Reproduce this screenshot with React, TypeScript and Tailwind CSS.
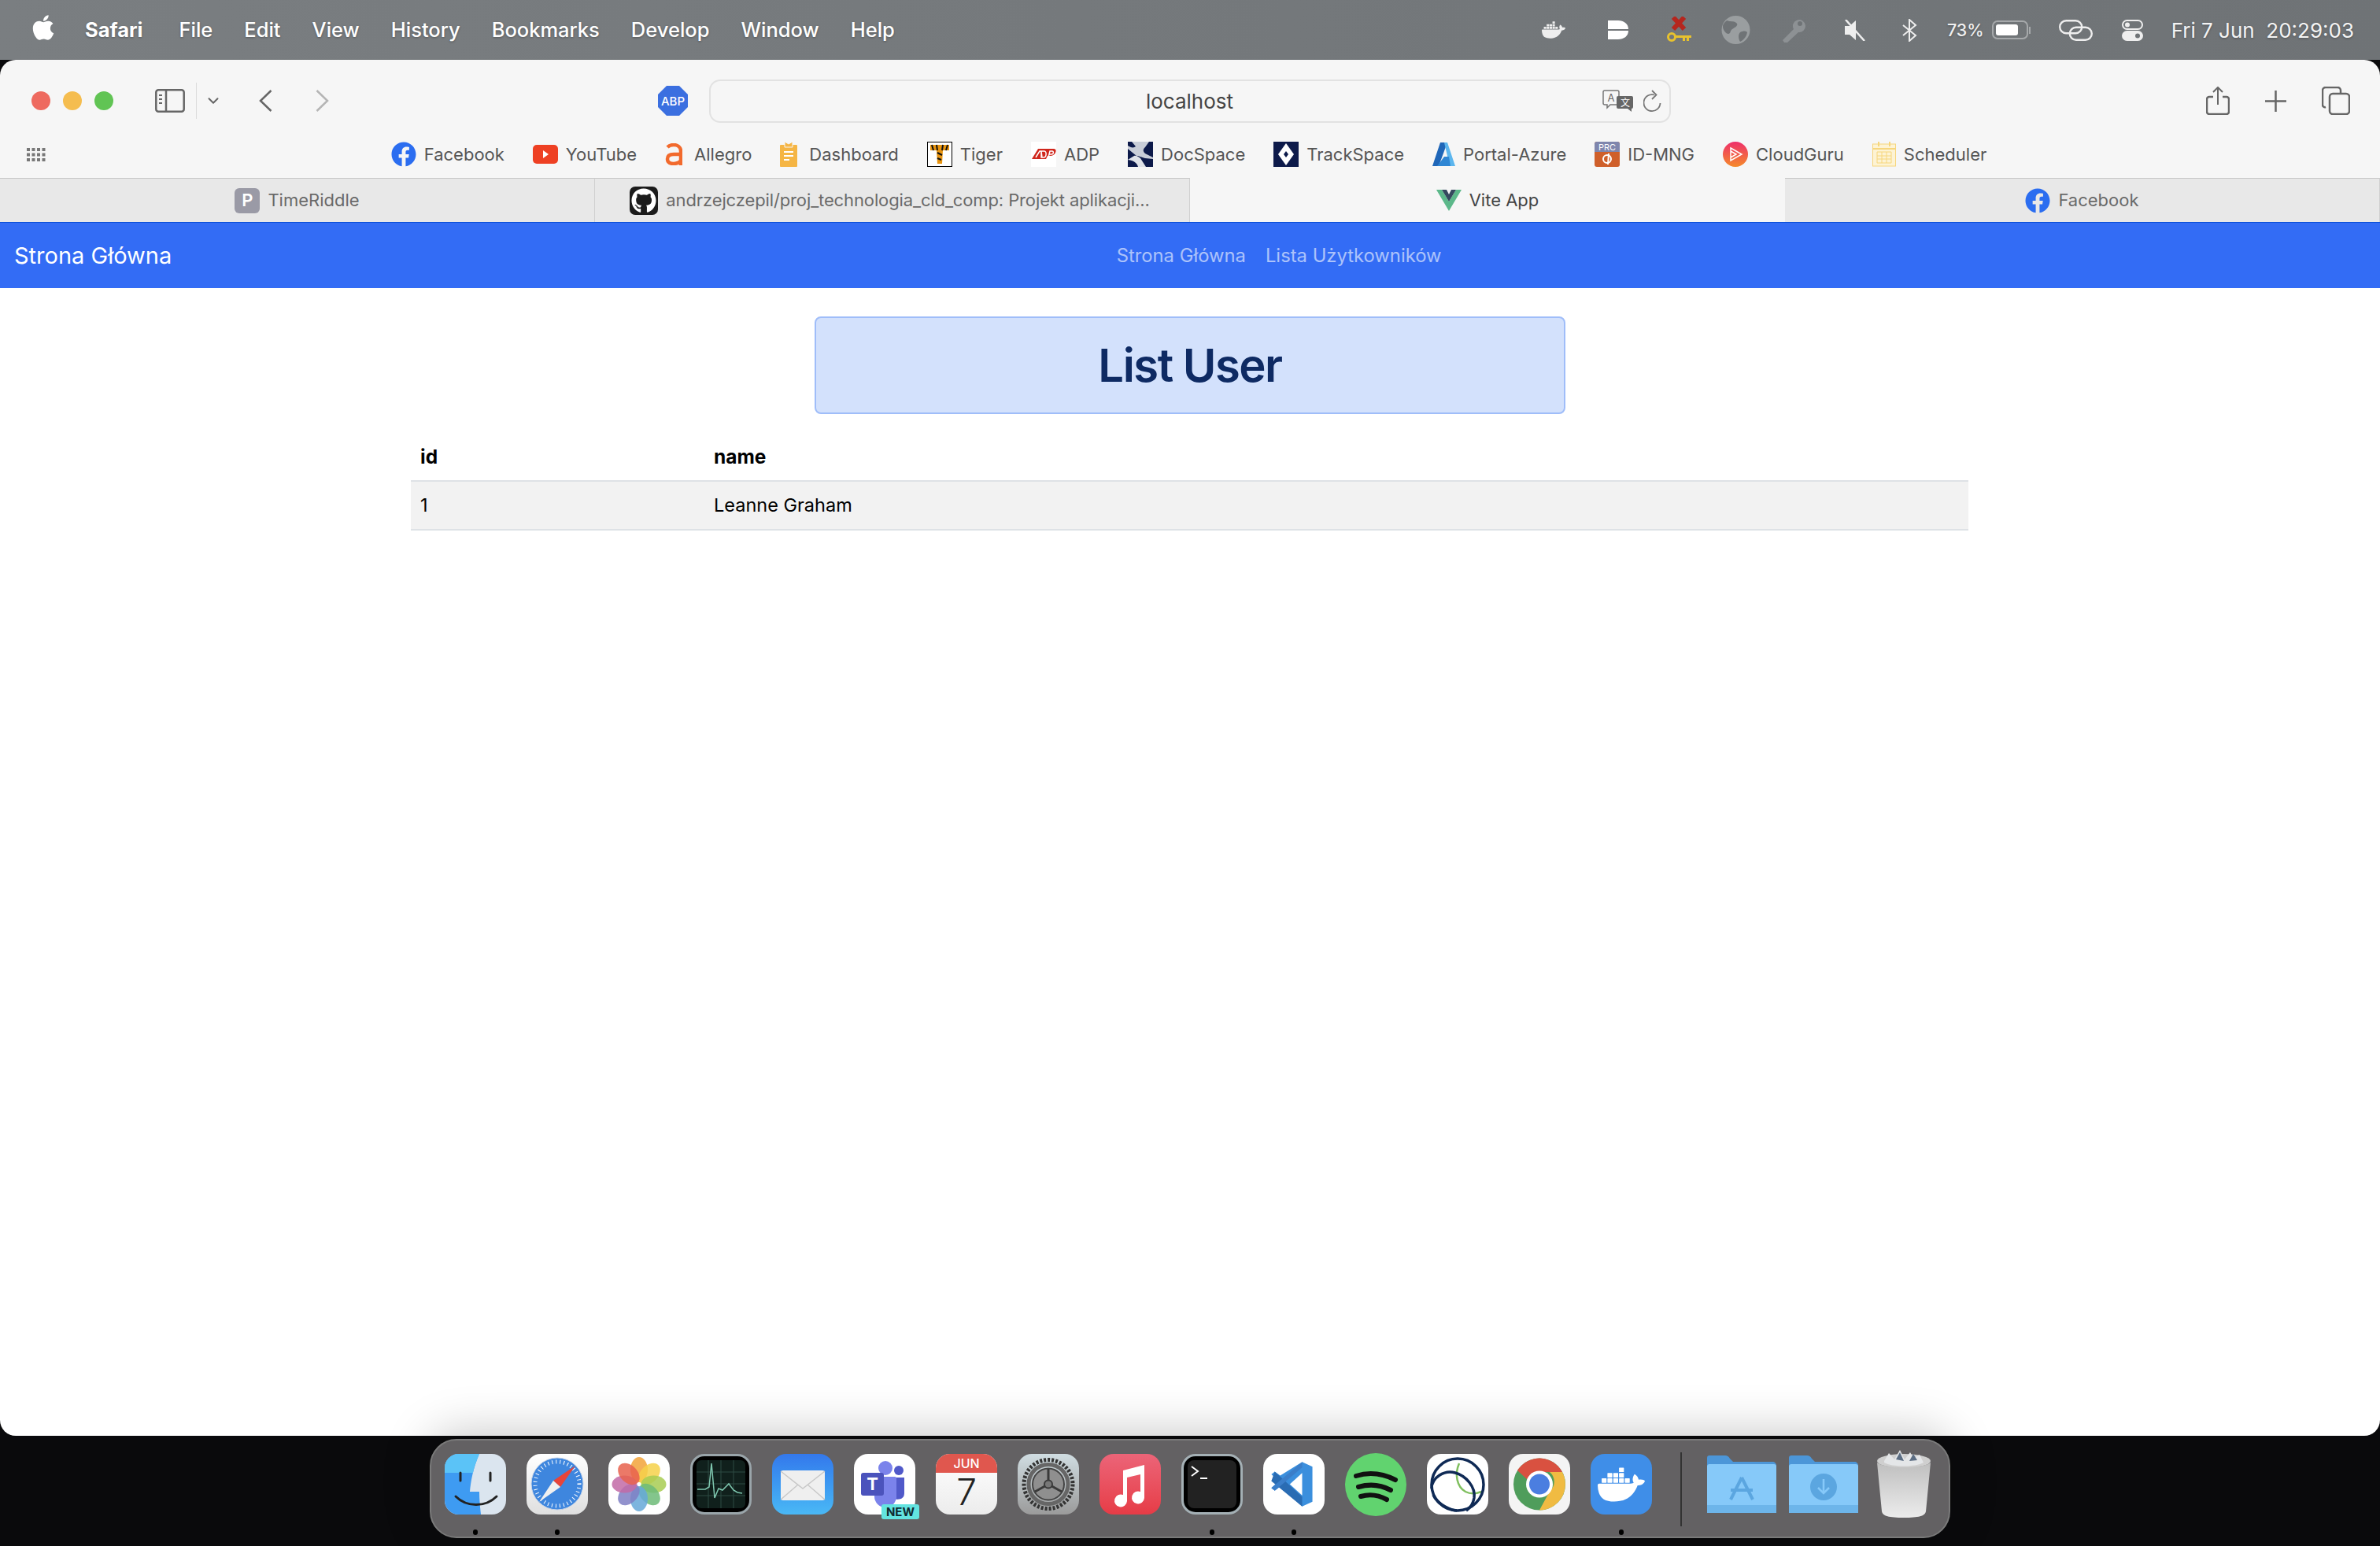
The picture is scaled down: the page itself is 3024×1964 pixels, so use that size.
import React from 'react'
import { FaApple, FaFacebook, FaGithub } from 'react-icons/fa'
import { SiDocker } from 'react-icons/si'
import { ChevronDown } from 'lucide-react'

const font = "font-['Inter','Noto_Sans',sans-serif]"

const menuItems = ['File', 'Edit', 'View', 'History', 'Bookmarks', 'Develop', 'Window', 'Help']

const MenuBar: React.FC = () => (
  <div className="h-[76px] shrink-0 flex items-center pl-[40px] pr-[33px] bg-gradient-to-r from-[#7a7e81] to-[#6f7376] text-white text-[25.500px] [text-shadow:0_1px_3px_rgba(0,0,0,0.3)]">
    <FaApple className="w-[30px] h-[36px] -mt-[6px]" />
    <span className="ml-[38px] font-bold">Safari</span>
    <div className="ml-[46px] flex gap-[40px] font-medium">
      {menuItems.map((item) => (
        <span key={item}>{item}</span>
      ))}
    </div>
    <div className="ml-auto flex items-center">
      <SiDocker className="w-[38px] h-[30px] text-[#eee]" />
      <svg className="ml-[50px]" width="26" height="24" viewBox="0 0 26 24">
        <path d="M0 0h13c7 0 13 4 13 11H0zM0 13h26c0 7-6 11-13 11H0z" fill="#fff" />
      </svg>
      <svg className="ml-[48px]" width="32" height="34" viewBox="0 0 32 34">
        <path d="M9 1l14 15M23 1L9 16" stroke="#b5261e" strokeWidth="6" />
        <circle cx="7" cy="26" r="4.500" fill="none" stroke="#e8c22e" strokeWidth="3" />
        <path d="M12 24h20v3h-3v4h-3v-4h-2v4h-3v-4h-9z" fill="#e8c22e" />
      </svg>
      <svg className="ml-[38px]" width="37" height="36" viewBox="0 0 37 36">
        <circle cx="18.500" cy="18" r="18" fill="#9a9ea0" />
        <path d="M7 6c5 2 8 0 12 3s-2 6-5 8-2 6-5 6-7-5-7-9 3-6 5-8zM24 21c4-2 7-2 9 0-1 6-5 10-9 12-2-3-3-9 0-12z" fill="#6f7376" />
      </svg>
      <svg className="ml-[40px]" width="33" height="32" viewBox="0 0 33 32">
        <path d="M3 32l-2-3 14-14a8 8 0 1 1 6 4L7 32z" fill="#8d9194" />
        <circle cx="23" cy="8" r="3" fill="#6f7376" />
      </svg>
      <svg className="ml-[45px]" width="29" height="27" viewBox="0 0 29 27">
        <path d="M2 8h6l8-7v25l-8-7H2z" fill="#eee" />
        <path d="M3 0l24 27" stroke="#eee" strokeWidth="2.500" />
      </svg>
      <svg className="ml-[45px]" width="20" height="29" viewBox="0 0 20 29" fill="none" stroke="#eee" strokeWidth="2">
        <path d="M2 8l16 13-8 7V1l8 7L2 21" />
      </svg>
      <span className="ml-[38px] text-[21.500px] font-medium text-[#f0f0f0]">73%</span>
      <div className="ml-[10px] flex items-center">
        <div className="w-[46px] h-[24px] rounded-[7px] border-2 border-[#a6a9ab] p-[3px]">
          <div className="w-[28px] h-full rounded-[3px] bg-white" />
        </div>
        <div className="ml-[1px] w-[2px] h-[9px] bg-[#a6a9ab]" />
      </div>
      <svg className="ml-[36px]" width="43" height="27" viewBox="0 0 43 27" fill="none" stroke="#eee" strokeWidth="2.400">
        <rect x="1.200" y="1.200" width="28" height="16" rx="8" />
        <rect x="13.800" y="9.800" width="28" height="16" rx="8" />
      </svg>
      <svg className="ml-[37px]" width="27" height="27" viewBox="0 0 27 27">
        <rect x="1" y="1" width="25" height="11" rx="5.500" fill="none" stroke="#eee" strokeWidth="2" />
        <circle cx="7" cy="6.500" r="3" fill="#eee" />
        <rect x="0" y="14" width="27" height="13" rx="6.500" fill="#eee" />
        <circle cx="20" cy="20.500" r="3" fill="#6f7376" />
      </svg>
      <span className="ml-[36px] whitespace-pre font-normal text-[26px] text-[#f4f4f4]">Fri 7 Jun  20:29:03</span>
    </div>
  </div>
)

const YouTubeIcon = () => (
  <svg width="32" height="24" viewBox="0 0 32 24">
    <rect width="32" height="24" rx="5" fill="#ee4023" />
    <path d="M13 7l7 5-7 5z" fill="#fff" />
  </svg>
)

const AllegroIcon = () => (
  <svg className="mr-[5px]" width="22" height="28" viewBox="0 0 22 28" fill="none" stroke="#f26a2d" strokeWidth="4.500">
    <path d="M3 5c2-2 5-3 8-3 5 0 9 3 9 8v18" />
    <path d="M20 14h-9c-5 0-8 2-8 6s3 6 8 6c4 0 9-2 9-5" />
  </svg>
)

const DashboardIcon = () => (
  <svg className="mr-[5px]" width="22" height="32" viewBox="0 0 22 32">
    <rect y="4" width="22" height="28" rx="1" fill="#f5b544" />
    <path d="M6 0l5 3 5-3v7H6z" fill="#f5b544" stroke="#f6f6f6" />
    <path d="M5 13h12M5 18h12M5 23h7" stroke="#fff" strokeWidth="2" />
  </svg>
)

const TigerIcon = () => (
  <svg width="32" height="32" viewBox="0 0 32 32">
    <rect x="0.500" y="0.500" width="31" height="31" fill="#fff" stroke="#000" />
    <path d="M4 4h24v7h-8l-1 17h-6l-1-17H4z" fill="#e8940f" />
    <path d="M6 4l2 7M12 4l1 7M20 4l-1 7M26 4l-2 7M13 14l6 3M13 21l5 2" stroke="#111" strokeWidth="2" />
  </svg>
)

const AdpIcon = () => (
  <svg width="32" height="32" viewBox="0 0 32 32">
    <rect width="32" height="32" fill="#fff" />
    <path d="M1 22L9 9h20c3 0 3 3 2 5s-3 4-7 4h-3l-2 4H1z" fill="#d0271d" />
    <path d="M6 20l5-8h2l1 8M13 12h4c3 0 3 8-1 8h-3zM22 20l2-8h3c2 0 2 4-1 4h-3" fill="none" stroke="#fff" strokeWidth="1.500" />
  </svg>
)

const DocSpaceIcon = () => (
  <svg width="32" height="32" viewBox="0 0 32 32">
    <rect width="32" height="32" fill="#0d1a4a" />
    <path d="M5 0h22l-5 7c-3 3-3 5 0 8l10 5v2l-10-1c-5-1-7-3-11-3L0 9V5c4 3 8 3 10 1z" fill="#c9ced8" />
    <path d="M0 23l8-5c3-1 5 1 8 3l7 11H13c-1-4-4-8-13-9z" fill="#dfe2e8" />
  </svg>
)

const TrackSpaceIcon = () => (
  <svg width="32" height="32" viewBox="0 0 32 32">
    <rect width="32" height="32" fill="#0d1a4a" />
    <path d="M16 2l10 14-10 14L6 16z" fill="#fff" />
    <path d="M16 12l3 4-3 4-3-4z" fill="#0d1a4a" />
  </svg>
)

const AzureIcon = () => (
  <svg width="29" height="32" viewBox="0 0 29 32">
    <path d="M10 1h9L8 31H0z" fill="#1f66b8" />
    <path d="M19 1h-4l7 30h7z" fill="#5cb6ee" />
    <path d="M6 31l9-12 6 0 2 12z" fill="#2f86d4" />
  </svg>
)

const IdMngIcon = () => (
  <svg width="32" height="32" viewBox="0 0 32 32">
    <rect width="32" height="32" rx="3" fill="#cf5f2a" />
    <path d="M3 0h26a3 3 0 0 1 3 3v10H0V3a3 3 0 0 1 3-3z" fill="#7f86ad" />
    <text x="16" y="11" textAnchor="middle" fontSize="11" fill="#fff" fontFamily="Inter, sans-serif">PRC</text>
    <circle cx="16" cy="22" r="5" fill="none" stroke="#fff" strokeWidth="2" />
    <path d="M18 15l-1 14" stroke="#fff" strokeWidth="2" />
  </svg>
)

const CloudGuruIcon = () => (
  <svg width="32" height="32" viewBox="0 0 32 32">
    <defs>
      <linearGradient id="guru" x1="0" y1="0" x2="0" y2="1">
        <stop offset="0" stopColor="#ee2f6b" />
        <stop offset="1" stopColor="#f58a2a" />
      </linearGradient>
    </defs>
    <circle cx="16" cy="16" r="16" fill="url(#guru)" />
    <path d="M10 8l14 8-14 8zM10 12l7 4-7 4" fill="none" stroke="#fff" strokeWidth="1.500" />
  </svg>
)

const SchedulerIcon = () => (
  <svg width="30" height="32" viewBox="0 0 30 32">
    <rect x="0.500" y="3" width="29" height="28" fill="#fdf3d4" stroke="#f6d67d" />
    <path d="M0 9h30" stroke="#f6d67d" strokeWidth="2" />
    <path d="M8 0v6M22 0v6" stroke="#f6d67d" strokeWidth="2" />
    <path d="M6 13h18v14H6zM6 18h18M6 22h18M12 13v14M18 13v14" fill="none" stroke="#f6d67d" />
  </svg>
)

const VueIcon = () => (
  <svg width="32" height="27" viewBox="0 0 32 27">
    <path d="M0 0h7l9 15 9-15h7L16 27z" fill="#5cb88a" />
    <path d="M7 0h6l3 6 3-6h6l-9 15z" fill="#35495e" />
  </svg>
)

const bookmarks = [
  { label: 'Facebook', icon: <FaFacebook className="w-[32px] h-[32px] text-[#2b6df0]" /> },
  { label: 'YouTube', icon: <YouTubeIcon /> },
  { label: 'Allegro', icon: <AllegroIcon /> },
  { label: 'Dashboard', icon: <DashboardIcon /> },
  { label: 'Tiger', icon: <TigerIcon /> },
  { label: 'ADP', icon: <AdpIcon /> },
  { label: 'DocSpace', icon: <DocSpaceIcon /> },
  { label: 'TrackSpace', icon: <TrackSpaceIcon /> },
  { label: 'Portal-Azure', icon: <AzureIcon /> },
  { label: 'ID-MNG', icon: <IdMngIcon /> },
  { label: 'CloudGuru', icon: <CloudGuruIcon /> },
  { label: 'Scheduler', icon: <SchedulerIcon /> },
]

const Toolbar: React.FC = () => (
  <div className="relative h-[150px] shrink-0 bg-[#f6f6f6] flex flex-col">
    <div className="h-[100px] flex items-center pl-[40px] pr-[38px] pt-[4px]">
      <div className="flex gap-[16px]">
        <div className="w-[24px] h-[24px] rounded-full bg-[#ee6a5f]" />
        <div className="w-[24px] h-[24px] rounded-full bg-[#f5bd4f]" />
        <div className="w-[24px] h-[24px] rounded-full bg-[#61c454]" />
      </div>
      <svg className="ml-[53px]" width="38" height="30" viewBox="0 0 38 30" fill="none" stroke="#666" strokeWidth="2.500">
        <rect x="1.300" y="1.300" width="35.400" height="27.400" rx="3" />
        <path d="M14 1v28" />
        <path d="M5 8h4M5 13h4M5 18h4" strokeWidth="2" />
      </svg>
      <div className="ml-[14px] w-px h-[46px] bg-[#dcdcdc]" />
      <ChevronDown className="ml-[10px] w-[22px] h-[22px] text-[#666]" strokeWidth={2.200} />
      <svg className="ml-[47px]" width="17" height="28" viewBox="0 0 17 28" fill="none" stroke="#666" strokeWidth="2.500">
        <path d="M15.500 1L2 14l13.500 13" />
      </svg>
      <svg className="ml-[55px]" width="17" height="28" viewBox="0 0 17 28" fill="none" stroke="#b5b5b5" strokeWidth="2.500">
        <path d="M1.500 1L15 14 1.500 27" />
      </svg>
      <svg className="ml-[417px]" width="40" height="40" viewBox="0 0 40 40">
        <path d="M12 1h16l11 11v16L28 39H12L1 28V12z" fill="#3b6fe0" />
        <text x="20" y="25.500" textAnchor="middle" fontSize="15" fontWeight="500" fill="#fff" fontFamily="Inter, sans-serif">ABP</text>
      </svg>
      <div className="ml-[26px] w-[1222px] h-[55px] rounded-[14px] border-2 border-[#e2e2e2] flex items-center pr-[10px]">
        <span className="ml-[84px] flex-1 text-center text-[26px] text-[#444]">localhost</span>
        <svg width="40" height="28" viewBox="0 0 40 28">
          <path d="M3 1h16a2 2 0 0 1 2 2v14a2 2 0 0 1-2 2h-9l-4 4v-4H3a2 2 0 0 1-2-2V3a2 2 0 0 1 2-2z" fill="#f6f6f6" stroke="#777" strokeWidth="1.500" />
          <text x="11" y="15" textAnchor="middle" fontSize="13" fill="#666" fontFamily="Inter, sans-serif">A</text>
          <path d="M20 8h17a2 2 0 0 1 2 2v12a2 2 0 0 1-2 2v4l-5-4H20a2 2 0 0 1-2-2V10a2 2 0 0 1 2-2z" fill="#666" />
          <text x="29" y="21" textAnchor="middle" fontSize="12" fill="#fff" fontFamily="'Noto Sans CJK SC', sans-serif">文</text>
        </svg>
        <svg className="ml-[12px]" width="23" height="28" viewBox="0 0 23 28" fill="none" stroke="#777" strokeWidth="1.800">
          <path d="M14 6.500A10.500 10.500 0 1 0 21.500 17" />
          <path d="M11 1l5.500 5.500L11 12" />
        </svg>
      </div>
      <div className="ml-auto flex items-center">
        <svg width="30" height="36" viewBox="0 0 30 36" fill="none" stroke="#666" strokeWidth="2.500">
          <path d="M9 13H4a3 3 0 0 0-3 3v16a3 3 0 0 0 3 3h22a3 3 0 0 0 3-3V16a3 3 0 0 0-3-3h-5" />
          <path d="M15 23V2M9 7l6-6 6 6" strokeWidth="2" />
        </svg>
        <svg className="ml-[45px]" width="27" height="27" viewBox="0 0 27 27" stroke="#666" strokeWidth="2.500">
          <path d="M13.500 0v27M0 13.500h27" />
        </svg>
        <svg className="ml-[45px]" width="36" height="36" viewBox="0 0 36 36" fill="none" stroke="#666" strokeWidth="2.500">
          <path d="M5 26a3 3 0 0 1-4-3V5a4 4 0 0 1 4-4h15a4 4 0 0 1 4 4v3" />
          <rect x="10" y="9" width="25" height="26" rx="4" />
        </svg>
      </div>
    </div>
    <div className="flex-1 relative flex items-center justify-center gap-[36px] pr-[3px] pb-[10px] text-[22px] text-[#555]">
      <svg className="absolute left-[34px] top-[12px]" width="24" height="18" viewBox="0 0 24 18" fill="#777">
        {[0, 6.500, 13].map((y) => [0, 6.500, 13, 19.500].map((x) => <rect key={`${x}-${y}`} x={x} y={y} width="4" height="4" />))}
      </svg>
      {bookmarks.map((b) => (
        <div key={b.label} className="flex items-center gap-[10px]">
          {b.icon}
          <span>{b.label}</span>
        </div>
      ))}
    </div>
  </div>
)

const tabs = [
  { label: 'TimeRiddle', active: false, text: '', icon: (
    <div className="w-[32px] h-[32px] rounded-[6px] bg-[#9a9aa6] text-white text-[22px] font-semibold flex items-center justify-center">P</div>
  ) },
  { label: 'andrzejczepil/proj_technologia_cld_comp: Projekt aplikacji...', active: false, text: 'mr-[6px] tracking-[-0.120px]', icon: (
    <div className="w-[36px] h-[36px] rounded-[7px] bg-[#1b1b1b] flex items-center justify-center">
      <FaGithub className="w-[32px] h-[32px] text-white" />
    </div>
  ) },
  { label: 'Vite App', active: true, text: '', icon: <VueIcon /> },
  { label: 'Facebook', active: false, text: '', icon: <FaFacebook className="w-[32px] h-[32px] text-[#2b6df0]" /> },
]

const Tabs: React.FC = () => (
  <div className="h-[57px] shrink-0 grid grid-cols-4 text-[22px] border-b border-b-[#0b4fd8]">
    {tabs.map((t) => (
      <div
        key={t.label}
        className={
          t.active
            ? 'flex items-center justify-center gap-[10px] bg-[#f6f6f6] text-[#444]'
            : 'flex items-center justify-center gap-[10px] bg-[#e8e8e8] text-[#6a6a6a] border-t border-t-[#c6c6c6] border-r border-r-[#d0d0d0]'
        }
      >
        {t.icon}
        <span className={t.text}>{t.label}</span>
      </div>
    ))}
  </div>
)

const NavBar: React.FC = () => (
  <nav className="h-[83px] shrink-0 bg-[#336cf5] flex items-center px-[18px]">
    <span className="mr-[16px] text-[29px] text-white">Strona Główna</span>
    <div className="flex-1 flex justify-center gap-[25px] pl-[10px] text-[23.800px] text-white/60">
      <span>Strona Główna</span>
      <span>Lista Użytkowników</span>
    </div>
  </nav>
)

const UserPage: React.FC = () => (
  <main className="flex-1 bg-white pt-[36px]">
    <div className="mx-auto w-[954px] h-[124px] rounded-[8px] border-2 border-[#9fbdf9] bg-[#d3e1fc] flex items-center justify-center">
      <h1 className="text-[58px] font-semibold tracking-[-1.500px] text-[#0e2a63]">List User</h1>
    </div>
    <table className="mt-[24px] ml-[522px] w-[1979px] text-[23.500px] text-black text-left border-collapse">
      <thead>
        <tr className="h-[61px] border-b-2 border-b-[#dee2e6] text-[24.500px]">
          <th className="w-[373px] pl-[12px] font-bold">id</th>
          <th className="pl-[12px] font-bold">name</th>
        </tr>
      </thead>
      <tbody>
        <tr className="h-[62px] bg-[#f2f2f2] border-b-2 border-b-[#dee2e6]">
          <td className="pl-[12px]">1</td>
          <td className="pl-[12px]">Leanne Graham</td>
        </tr>
      </tbody>
    </table>
  </main>
)

const Tile: React.FC<{ className?: string; children?: React.ReactNode }> = ({ className = '', children }) => (
  <div className={`relative w-[78px] h-[77px] rounded-[18px] overflow-hidden ${className}`}>{children}</div>
)

const Finder = () => (
  <Tile className="bg-[#dbe5ef]">
    <svg width="78" height="77" viewBox="0 0 78 77">
      <path d="M0 0h44C36 18 33 36 32 48h12c0 10 1 20 2 29H0z" fill="#3e9bf2" />
      <path d="M0 0h44C40 10 37 18 36 24H0z" fill="#5bc3f7" />
      <path d="M20 24v10M58 24v10" stroke="#222" strokeWidth="3" strokeLinecap="round" />
      <path d="M14 54c14 14 38 14 52 0" fill="none" stroke="#222" strokeWidth="3" strokeLinecap="round" />
    </svg>
  </Tile>
)

const Safari = () => (
  <Tile className="bg-gradient-to-b from-white to-[#dfdfdf]">
    <svg width="78" height="77" viewBox="0 0 78 77">
      <circle cx="39" cy="38" r="33" fill="#3e86de" stroke="#c8d4e6" />
      <circle cx="39" cy="38" r="28" fill="none" stroke="#fff" strokeWidth="5" strokeDasharray="1 4" />
      <path d="M62 15L34 34l9 8z" fill="#e8443a" />
      <path d="M16 61l18-27 9 8z" fill="#f0f0f0" />
    </svg>
  </Tile>
)

const petals = ['#f2a33a', '#f6d14a', '#a8cc52', '#6dbb78', '#66a8d8', '#7f7fc4', '#c26aa6', '#e8624e']

const Photos = () => (
  <Tile className="bg-white">
    <svg width="78" height="77" viewBox="0 0 78 77">
      {petals.map((c, i) => (
        <ellipse key={c} cx="39" cy="20" rx="11" ry="16" fill={c} opacity="0.85" transform={`rotate(${i * 45} 39 38.500)`} />
      ))}
    </svg>
  </Tile>
)

const ActivityMonitor = () => (
  <Tile className="bg-black border-[3px] border-[#9aa5aa]">
    <svg width="72" height="71" viewBox="0 0 72 71">
      <rect x="5" y="5" width="62" height="61" rx="6" fill="#10201c" />
      <path d="M5 20h62M5 35h62M5 50h62M20 5v61M36 5v61M52 5v61" stroke="#2d4a42" strokeWidth="1" />
      <path d="M6 42h10l5-3 3-30 4 44 5-12 5 2 8-8 6 8 5 3 6 1" fill="none" stroke="#7fc8b0" strokeWidth="1.500" />
    </svg>
  </Tile>
)

const Mail = () => (
  <Tile className="bg-gradient-to-b from-[#3478ec] to-[#4ab8f5]">
    <svg width="78" height="77" viewBox="0 0 78 77">
      <rect x="11" y="21" width="56" height="38" rx="3" fill="#efefef" />
      <path d="M11 22l28 22 28-22M11 58l22-19M67 58L45 39" fill="none" stroke="#c8c8c8" strokeWidth="1.500" />
    </svg>
  </Tile>
)

const Teams = () => (
  <div className="relative w-[78px] h-[77px]">
    <Tile className="bg-white">
      <svg width="78" height="77" viewBox="0 0 78 77">
        <circle cx="40" cy="18" r="9" fill="#7b83eb" />
        <circle cx="57" cy="21" r="6" fill="#5059c9" />
        <path d="M50 30h14v20c0 7-6 9-14 7z" fill="#5059c9" />
        <rect x="28" y="29" width="26" height="28" rx="2" fill="#7b83eb" />
        <circle cx="40" cy="54" r="14" fill="#7b83eb" />
        <rect x="9" y="24" width="29" height="29" rx="3" fill="#4b53bc" />
        <text x="23.500" y="46" textAnchor="middle" fontSize="22" fontWeight="700" fill="#fff" fontFamily="Inter, sans-serif">T</text>
      </svg>
    </Tile>
    <div className="absolute left-[35px] top-[64px] w-[48px] h-[19px] rounded-[3px] bg-[#63e4e0] text-[15px] font-bold leading-[19px] text-center text-[#102a30]">NEW</div>
  </div>
)

const Calendar = () => (
  <Tile className="bg-gradient-to-b from-white to-[#ececec]">
    <div className="h-[24px] bg-[#e0574e] text-white text-[16px] font-medium leading-[24px] text-center">JUN</div>
    <div className="text-[46px] font-light leading-[48px] text-center text-[#222]">7</div>
  </Tile>
)

const SystemPrefs = () => (
  <Tile className="bg-gradient-to-b from-[#d0dde2] to-[#9b9b9b]">
    <svg width="78" height="77" viewBox="0 0 78 77" fill="none">
      <circle cx="39" cy="38.500" r="31" stroke="#333" strokeWidth="5" strokeDasharray="3 2" />
      <circle cx="39" cy="38.500" r="25" stroke="#666" strokeWidth="5" />
      <circle cx="39" cy="38.500" r="20" fill="#8f8f8f" stroke="#444" strokeWidth="2" />
      <path d="M39 38.500V19M39 38.500L22 48M39 38.500L56 48" stroke="#3a3a3a" strokeWidth="3" />
      <circle cx="39" cy="38.500" r="5" fill="#777" stroke="#3a3a3a" strokeWidth="2" />
    </svg>
  </Tile>
)

const Music = () => (
  <Tile className="bg-gradient-to-b from-[#ec6478] to-[#e63b46]">
    <svg width="78" height="77" viewBox="0 0 78 77">
      <path d="M30 21l27-7v42a8 8 0 1 1-5-8V26l-17 4v30a8 8 0 1 1-5-8z" fill="#fff" />
    </svg>
  </Tile>
)

const TerminalApp = () => (
  <Tile className="bg-black border-[3px] border-[#a4b0b5]">
    <div className="absolute inset-[5px] rounded-[8px] bg-[#222]" />
    <svg className="absolute inset-0" width="72" height="71" viewBox="0 0 72 71" fill="none" stroke="#fff" strokeWidth="2">
      <path d="M10 13l8 6-8 6M21 28h9" />
    </svg>
  </Tile>
)

const VSCode = () => (
  <Tile className="bg-white">
    <svg width="78" height="77" viewBox="0 0 78 77">
      <g transform="translate(6 5) scale(0.87)">
        <path d="M50 6l15 7v51l-15 7-32-29-8 6-5-4 11-10L5 24l5-4 8 6z" fill="#3b8fdd" />
        <path d="M10 20l40 37v14L5 34z" fill="#2a6cb3" />
        <path d="M50 6L5 44l5 4 40-34z" fill="#3b7ec9" />
        <path d="M50 22v33L32 38.500z" fill="#fff" />
      </g>
    </svg>
  </Tile>
)

const Spotify = () => (
  <svg width="78" height="80" viewBox="0 0 78 80" className="-mt-[1px]">
    <ellipse cx="39" cy="40" rx="39" ry="40" fill="#61d36f" />
    <path d="M14 29c16-5 34-3 50 5M17 43c14-4 28-3 41 4M20 55c11-3 22-2 33 4" fill="none" stroke="#111" strokeWidth="6" strokeLinecap="round" />
  </svg>
)

const CircleApp = () => (
  <Tile className="bg-white">
    <svg width="78" height="77" viewBox="0 0 78 77" fill="none">
      <path d="M41 12c-6 14-3 30 8 36 6 3 13 3 20 0" stroke="#7fbf5e" strokeWidth="2.500" />
      <circle cx="39" cy="39" r="33" stroke="#0f2a55" strokeWidth="3.500" />
      <path d="M6 44c0-14 16-24 30-20 14 4 26 18 24 32M38 72c-4 0-24-6-30-20M60 56c-1 6-4 12-10 16" stroke="#0f2a55" strokeWidth="3.500" />
    </svg>
  </Tile>
)

const Chrome = () => (
  <Tile className="bg-[#f4f4f4]">
    <svg width="78" height="77" viewBox="0 0 78 77">
      <circle cx="39" cy="38.500" r="33" fill="#4f9d5b" />
      <path d="M11 21A33 33 0 0 1 68 23H39a16 16 0 0 0-15 10z" fill="#d95140" />
      <path d="M68 23a33 33 0 0 1-29 48.500l13-24a16 16 0 0 0 0-24.500z" fill="#f0bb42" />
      <circle cx="39" cy="38.500" r="17" fill="#fff" />
      <circle cx="39" cy="38.500" r="13" fill="#4b7ee0" />
    </svg>
  </Tile>
)

const DockerApp = () => (
  <Tile className="bg-[#3f8ee8] flex items-center justify-center">
    <SiDocker className="w-[60px] h-[60px] text-white" />
  </Tile>
)

const Folder: React.FC<{ children: React.ReactNode }> = ({ children }) => (
  <svg width="88" height="75" viewBox="0 0 88 75" className="mt-[2px]">
    <path d="M3 0h20c3 0 4 1 6 4l4 4h50c3 0 5 2 5 5v10H0V3c0-2 1-3 3-3z" fill="#4c96d8" />
    <rect y="11" width="88" height="62" rx="3" fill="#86c9f9" />
    <rect y="63" width="88" height="10" fill="#6db5ea" />
    {children}
  </svg>
)

const Trash = () => (
  <svg width="70" height="88" viewBox="0 0 70 88" className="ml-[7px] -mt-[7px]">
    <defs>
      <linearGradient id="bin" x1="0" y1="0" x2="0" y2="1">
        <stop offset="0" stopColor="#bfbfbf" />
        <stop offset="1" stopColor="#ececec" />
      </linearGradient>
    </defs>
    <ellipse cx="35" cy="16" rx="34" ry="9" fill="#cfcfcf" />
    <path d="M10 16l6-10 7 8 7-12 6 12 7-9 4 7 8-4 5 10c-10 6-40 6-50 0z" fill="#e4e6e8" />
    <path d="M25 14l5-9 5 11zM42 16l5-9 5 8z" fill="#5c6e84" />
    <path d="M1 18c10 8 58 8 68 0l-6 62c-1 6-9 8-28 8s-27-2-28-8z" fill="url(#bin)" />
  </svg>
)

const dockApps = [
  { name: 'finder', el: <Finder />, running: true },
  { name: 'safari', el: <Safari />, running: true },
  { name: 'photos', el: <Photos />, running: false },
  { name: 'activity', el: <ActivityMonitor />, running: false },
  { name: 'mail', el: <Mail />, running: false },
  { name: 'teams', el: <Teams />, running: false },
  { name: 'calendar', el: <Calendar />, running: false },
  { name: 'prefs', el: <SystemPrefs />, running: false },
  { name: 'music', el: <Music />, running: false },
  { name: 'terminal', el: <TerminalApp />, running: true },
  { name: 'vscode', el: <VSCode />, running: true },
  { name: 'spotify', el: <Spotify />, running: false },
  { name: 'circle', el: <CircleApp />, running: false },
  { name: 'chrome', el: <Chrome />, running: false },
  { name: 'docker', el: <DockerApp />, running: true },
]

const Dock: React.FC = () => (
  <div className="mx-auto mt-[4px] w-[1932px] h-[126px] rounded-[34px] border-2 border-[#7a7a7a] bg-[#636163] shadow-[0_-8px_60px_rgba(0,0,0,0.22)] flex pl-[17px] pt-[17px]">
    <div className="flex gap-[26px]">
      {dockApps.map((app) => (
        <div key={app.name} className="w-[78px] h-[104px] flex flex-col items-center">
          <div className="h-[77px]">{app.el}</div>
          {app.running && <div className="mt-[19px] w-[6px] h-[7px] rounded-full bg-black" />}
        </div>
      ))}
    </div>
    <div className="ml-[36px] mt-[-2px] w-[2px] h-[94px] bg-[#333]" />
    <div className="ml-[32px] flex gap-[16px]">
      <Folder>
        <path d="M44 28l14 28M44 28L30 56M30 44h28" fill="none" stroke="#5ba6e0" strokeWidth="4" />
      </Folder>
      <Folder>
        <circle cx="44" cy="40" r="17" fill="#5ba6e0" />
        <path d="M44 30v18M37 41l7 7 7-7" fill="none" stroke="#86c9f9" strokeWidth="2.500" />
      </Folder>
      <Trash />
    </div>
  </div>
)

export default function App() {
  return (
    <div className={`w-[3024px] h-[1964px] overflow-hidden bg-[#0a0a0c] flex flex-col ${font}`}>
      <MenuBar />
      <div className="h-[1748px] shrink-0 rounded-[20px] overflow-hidden flex flex-col">
        <Toolbar />
        <Tabs />
        <NavBar />
        <UserPage />
      </div>
      <Dock />
    </div>
  )
}
